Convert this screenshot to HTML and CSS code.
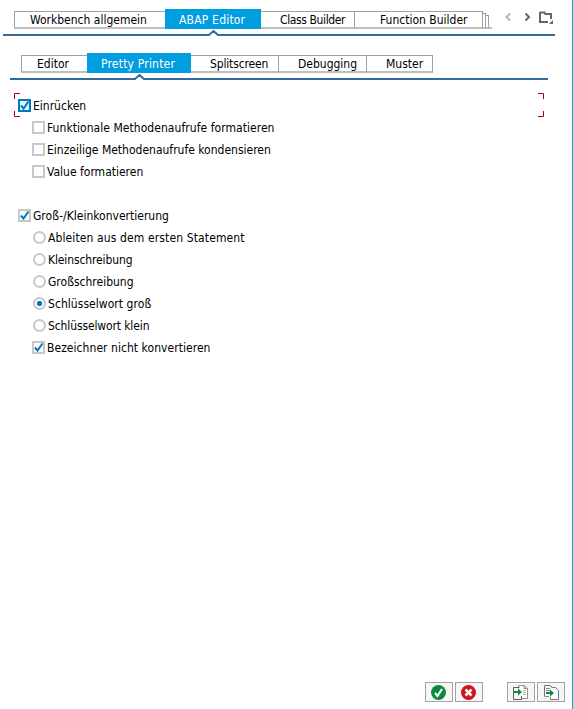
FILE: index.html
```html
<!DOCTYPE html>
<html lang="de">
<head>
<meta charset="utf-8">
<title>ABAP Editor</title>
<link rel="stylesheet" href="styles.css">
</head>
<body>
<main class="dialog">
  <header class="outer-head">
    <nav class="tabs outer">
      <div class="tab workbench"><span>Workbench allgemein</span></div>
      <div class="tab active abap"><span>ABAP Editor</span></div>
      <div class="tab class-builder"><span>Class Builder</span></div>
      <div class="tab function-builder"><span>Function Builder</span></div>
      <i class="stack"></i><i class="stack second"></i><i class="stack-end"></i>
    </nav>
    <svg class="tools" width="56" height="20" viewBox="0 0 56 20">
      <path d="M10 4.500L6.500 8L10 11.500" fill="none" stroke="#b5b5b5" stroke-width="2"/>
      <path d="M25.500 4.500L29 8L25.500 11.500" fill="none" stroke="#666" stroke-width="2"/>
      <path d="M40 3V13H48M40 3.500H44.500L45.500 5H51V10" fill="none" stroke="#666" stroke-width="2"/>
      <path d="M53 11V15H49Z" fill="#666"/>
    </svg>
  </header>
  <svg class="rule outer-rule" width="552" height="7" viewBox="0 0 552 7"><path d="M0 5H206L210.500 1L215 5H552" fill="none" stroke="#346a9c" stroke-width="2"/></svg>
  <nav class="tabs inner">
    <div class="tab editor"><span>Editor</span></div>
    <div class="tab active pretty"><span>Pretty Printer</span></div>
    <div class="tab split"><span>Splitscreen</span></div>
    <div class="tab debug"><span>Debugging</span></div>
    <div class="tab muster"><span>Muster</span></div>
  </nav>
  <svg class="rule inner-rule" width="538" height="7" viewBox="0 0 538 7"><path d="M0 5H125L129.500 1L134 5H538" fill="none" stroke="#346a9c" stroke-width="2"/></svg>
  <section class="options">
    <svg class="focus" width="530" height="24" viewBox="0 0 530 24"><path d="M6 .5H.5V6M.5 18V23.500H6M524 .5H529.500V6M529.500 18V23.500H524" fill="none" stroke="#a80000"/></svg>
    <div class="row"><i class="box focused"><svg width="13" height="13"><path d="M3 6.500L5.500 9.500L10.500 2.500" /></svg></i><span>Einrücken</span></div>
    <div class="row sub"><i class="box"></i><span class="wide">Funktionale Methodenaufrufe formatieren</span></div>
    <div class="row sub"><i class="box"></i><span>Einzeilige Methodenaufrufe kondensieren</span></div>
    <div class="row sub"><i class="box"></i><span>Value formatieren</span></div>
    <div class="row gap"><i class="box"><svg width="13" height="13"><path d="M3 6.500L5.500 9.500L10.500 2.500" /></svg></i><span>Groß-/Kleinkonvertierung</span></div>
    <div class="row radio"><i class="dot"></i><span class="wider">Ableiten aus dem ersten Statement</span></div>
    <div class="row radio"><i class="dot"></i><span class="narrow">Kleinschreibung</span></div>
    <div class="row radio"><i class="dot"></i><span>Großschreibung</span></div>
    <div class="row radio"><i class="dot on"></i><span class="wide">Schlüsselwort groß</span></div>
    <div class="row radio"><i class="dot"></i><span class="narrow">Schlüsselwort klein</span></div>
    <div class="row sub"><i class="box"><svg width="13" height="13"><path d="M3 6.500L5.500 9.500L10.500 2.500" /></svg></i><span class="wide">Bezeichner nicht konvertieren</span></div>
  </section>
  <footer class="actions">
    <button><svg width="26" height="18"><circle cx="12.500" cy="9.500" r="7.500" fill="#098a3d"/><path d="M9 10L11.500 13L16 6" fill="none" stroke="#fff" stroke-width="2.200"/></svg></button>
    <button><svg width="26" height="18"><circle cx="12.500" cy="9.500" r="7.500" fill="#d0121b"/><path d="M9.500 6.500L15.500 12.500M15.500 6.500L9.500 12.500" fill="none" stroke="#fff" stroke-width="2.500"/></svg></button>
    <button class="apart"><svg width="26" height="18"><path d="M10.500 5.500V2.500H16L19.500 5.500V15.500H13.500M16 2.500V5.500H19.500" fill="#fff" stroke="#999080"/><path d="M11.500 4.500H5.500V16.500H13.500V13" fill="none" stroke="#625b50"/><path d="M15 7.500H18M15 9.500H18M15 11.500H18" stroke="#aaa"/><path d="M6 8H10V5.500L14 9L10 12.500V10H6Z" fill="#098a3d"/></svg></button>
    <button><svg width="26" height="18"><path d="M6.500 13.500V2.500H12L14.500 4.500" fill="none" stroke="#77736c"/><path d="M8 5.500H12M8 7.500H12M7 13.500H11" stroke="#888"/><path d="M13.500 4.500H17.500L20.500 7.500V16.500H12.500V14" fill="#fff" stroke="#84776b"/><path d="M20.500 8V16" stroke="#5279a5"/><path d="M8 9H12V6.500L16 10L12 13.500V11H8Z" fill="#098a3d"/></svg></button>
  </footer>
</main>
</body>
</html>
```
FILE: styles.css
```css
* { box-sizing: border-box; }
body { margin: 0; background: #fff; color: #000; font: 12px/18px "DejaVu Sans Condensed", "DejaVu Sans", sans-serif; font-stretch: condensed; }
svg { display: block; flex: none; }
.dialog { width: 573px; height: 709px; display: flex; flex-direction: column; border-right: 1px solid #009de0; }
.outer-head { display: flex; height: 20px; margin-top: 9px; }
.tabs { display: flex; align-items: flex-end; height: 20px; flex: none; }
.outer { margin-left: 14px; width: 478px; }
.inner { margin: 16px 0 0 21px; }
.tab { height: 18px; border-top: 1px solid #a0a0a0; border-bottom: 2px solid #bfbfbf; border-right: 1px solid #a0a0a0; white-space: nowrap; line-height: 16px; flex: none; }
.tab:first-child { border-left: 1px solid #a0a0a0; border-right: 0; }
.tab.active { height: 20px; border: 0; background: #009de0; color: #fff; line-height: 22px; letter-spacing: .2px; }
.workbench { width: 151px; padding-left: 15px; }
.abap { width: 96px; padding-left: 14px; }
.class-builder { width: 94px; padding-left: 19px; letter-spacing: -.38px; }
.function-builder { width: 128px; padding-left: 25px; }
.editor { width: 66px; padding-left: 15px; }
.pretty { width: 104px; padding-left: 14px; }
.split { width: 88px; padding-left: 19px; letter-spacing: -.15px; }
.debug { width: 88px; padding-left: 19px; }
.muster { width: 66px; padding-left: 19px; }
.stack { width: 3px; height: 16px; border: solid #a0a0a0; border-width: 1px 1px 0 0; border-bottom: 2px solid #bfbfbf; }
.second { height: 14px; }
.stack-end { width: 3px; height: 2px; background: #bfbfbf; }
.tools { margin-left: 8px; }
.outer-rule { margin: 1px 0 0 3px; }
.inner-rule { margin: 1px 0 0 10px; }
.options { position: relative; margin-top: 12px; }
.focus { position: absolute; left: 14px; top: 0; }
.row { display: flex; height: 22px; padding: 5px 0 0 18px; line-height: 14px; white-space: nowrap; }
.focus + .row { margin-top: 1px; }
.sub { padding-left: 32px; }
.radio { padding-left: 33px; }
.gap { margin-top: 22px; }
.row span { margin-left: 2px; }
.wide { letter-spacing: .05px; }
.wider { letter-spacing: .12px; }
.narrow { letter-spacing: -.12px; }
.box { width: 13px; height: 13px; border: 2px solid #c8c8c8; flex: none; }
.box svg { margin: -2px; fill: none; stroke: #0078bd; stroke-width: 2; }
.focused { border-color: #0079c1; background: #e5f2fa; }
.dot { width: 13px; height: 13px; border: 2px solid #c8c8c8; border-radius: 50%; flex: none; }
.on { background: radial-gradient(circle, #0079c1 0 2.400px, transparent 3px); }
.actions { display: flex; gap: 2px; margin: auto 7px 7px auto; }
.actions button { width: 28px; height: 20px; padding: 0; border: 1px solid #a3a3a3; background: #f6f6f6; }
.actions .apart { margin-left: 22px; }
```
